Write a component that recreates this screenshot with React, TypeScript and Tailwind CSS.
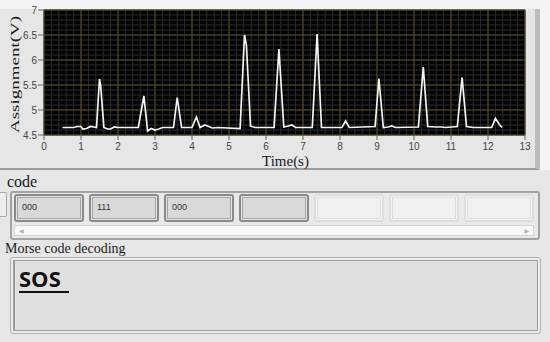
import React from "react";

const X0 = 44;
const Y0 = 10;
const PW = 481;
const PH = 125;
const px = (t: number) => X0 + (t / 13) * PW;
const py = (v: number) => Y0 + PH - ((v - 4.5) / 2.5) * PH;

const data: [number, number][] = [
  [0.5, 4.65], [0.8, 4.65], [0.9, 4.67], [1.0, 4.67], [1.05, 4.62], [1.15, 4.63], [1.25, 4.67], [1.35, 4.66], [1.42, 4.65],
  [1.5, 5.62], [1.53, 5.5], [1.62, 4.65], [1.72, 4.62], [1.8, 4.62], [1.9, 4.66], [2.0, 4.65], [2.55, 4.65],
  [2.7, 5.28], [2.8, 4.58], [2.9, 4.63], [3.0, 4.6], [3.1, 4.62], [3.2, 4.65], [3.5, 4.65],
  [3.6, 5.25], [3.72, 4.65], [4.0, 4.65], [4.12, 4.86], [4.22, 4.65], [4.35, 4.7], [4.45, 4.67], [4.55, 4.64], [4.7, 4.65], [5.3, 4.63],
  [5.42, 6.5], [5.47, 6.3], [5.58, 4.68], [5.7, 4.65], [6.22, 4.65],
  [6.35, 6.22], [6.48, 4.66], [6.6, 4.68], [6.7, 4.7], [6.8, 4.65], [7.25, 4.65],
  [7.38, 6.52], [7.5, 4.65], [8.05, 4.65], [8.15, 4.78], [8.25, 4.65], [8.95, 4.67],
  [9.05, 5.63], [9.17, 4.65], [9.3, 4.66], [9.4, 4.68], [9.5, 4.65], [10.12, 4.66],
  [10.25, 5.86], [10.37, 4.67], [10.6, 4.66], [10.75, 4.66], [10.85, 4.65], [11.17, 4.67],
  [11.3, 5.65], [11.42, 4.67], [11.6, 4.65], [12.1, 4.65], [12.2, 4.83], [12.32, 4.7], [12.38, 4.65],
];

function Chart() {
  const minorV = Array.from({ length: 66 }, (_, i) => X0 + (i * PW) / 65);
  const minorH = Array.from({ length: 26 }, (_, j) => Y0 + j * 5);
  const majorV = Array.from({ length: 14 }, (_, i) => X0 + (i * PW) / 13);
  const majorH = Array.from({ length: 6 }, (_, k) => Y0 + k * 25);
  const yLabels = ["7", "6.5", "6", "5.5", "5", "4.5"];
  const pts = data.map(([t, v]) => `${px(t).toFixed(1)},${py(v).toFixed(1)}`).join(" ");
  return (
    <svg width={511} height={145} className="block overflow-visible">
      <g transform="translate(-24,-9)">
        <rect x={X0} y={Y0} width={PW} height={PH} fill="#020202" />
        {minorV.map((x, i) => (
          <line key={"mv" + i} x1={x} x2={x} y1={Y0} y2={Y0 + PH} stroke="#2b2b2b" strokeWidth={1} />
        ))}
        {minorH.map((y, i) => (
          <line key={"mh" + i} x1={X0} x2={X0 + PW} y1={y} y2={y} stroke="#2b2b2b" strokeWidth={1} />
        ))}
        {majorV.map((x, i) => (
          <line key={"Mv" + i} x1={x} x2={x} y1={Y0} y2={Y0 + PH} stroke="#54461c" strokeWidth={1} />
        ))}
        {majorH.map((y, i) => (
          <line key={"Mh" + i} x1={X0} x2={X0 + PW} y1={y} y2={y} stroke="#54461c" strokeWidth={1} />
        ))}
        <polyline points={pts} fill="none" stroke="#f4f4f4" strokeWidth={1.7} strokeLinejoin="miter" />
        {majorH.map((y, i) => (
          <g key={"yl" + i}>
            <line x1={38} x2={44} y1={y} y2={y} stroke="#666" strokeWidth={1} />
            <text x={37} y={y + 3.5} textAnchor="end" fontSize={10} fill="#444" fontFamily="'Liberation Sans', Arial, sans-serif">
              {yLabels[i]}
            </text>
          </g>
        ))}
        {majorV.map((x, i) => (
          <g key={"xl" + i}>
            <line x1={x} x2={x} y1={135} y2={140} stroke="#666" strokeWidth={1} />
            <text x={x} y={150} textAnchor="middle" fontSize={10} fill="#444" fontFamily="'Liberation Sans', Arial, sans-serif">
              {i}
            </text>
          </g>
        ))}
      </g>
    </svg>
  );
}

function FilledCell({ text }: { text?: string }) {
  return (
    <div className="w-[70px] h-[28px] rounded-[3px] border-2 border-[#8a8a8a] bg-[#e4e4e4] p-[1px]">
      <div className="h-full border border-[#a6a6a6] bg-[#d9d9d9] flex items-center pl-[4px] text-[9px] text-[#333] font-['Liberation_Sans',Arial,sans-serif]">
        {text}
      </div>
    </div>
  );
}

function EmptyCell() {
  return (
    <div className="w-[70px] h-[28px] rounded-[3px] border-2 border-[#dedede] bg-[#f4f4f4] p-[1px]">
      <div className="h-full border border-[#dcdcdc] bg-[#f1f1f1]" />
    </div>
  );
}

export default function App() {
  return (
    <div className="w-[550px] h-[342px] overflow-hidden bg-[#e6e6e6] font-['Liberation_Serif','Times_New_Roman',serif] text-[#1a1a1a]">
      <div className="bg-[#f4f4f4] pt-[9px]">
        <div className="w-[540px] h-[161px] bg-[#e6e6e6] border-r-[5px] border-r-[#bcbcbc] border-b-2 border-b-[#9c9c9c] flex flex-col">
          <div className="flex h-[145px]">
            <div className="w-[24px] shrink-0 h-full flex items-center justify-center pl-[6px] pb-[14px]">
              <span className="whitespace-nowrap -rotate-90 scale-y-[0.7] text-[19px] leading-none">Assignment(V)</span>
            </div>
            <Chart />
          </div>
          <div className="ml-[262px] text-[15px] leading-[14px] whitespace-nowrap">Time(s)</div>
        </div>
      </div>
      <div className="pt-[3px]">
        <div className="pl-[7px] text-[16px] leading-[18px]">code</div>
        <div className="flex items-start">
          <div className="w-[7px] h-[25px] mt-[1px] border border-l-0 border-[#a8a8a8] rounded-r-[2px] bg-[#ededed]" />
          <div className="ml-[3px] w-[530px] h-[49px] rounded-[3px] border-2 border-[#a3a3a3] bg-[#e9e9e9] px-[2px] pt-[1px] flex flex-col gap-[3px]">
            <div className="flex gap-[5px]">
              <FilledCell text="000" />
              <FilledCell text="111" />
              <FilledCell text="000" />
              <FilledCell />
              <EmptyCell />
              <EmptyCell />
              <EmptyCell />
            </div>
            <div className="h-[11px] w-[520px] border border-[#d4d4d4] bg-[#f8f8f8] flex items-center justify-between px-[4px] text-[6px] text-[#b0b0b0] font-['DejaVu_Sans',sans-serif]">
              <span>◀</span>
              <span>▶</span>
            </div>
          </div>
        </div>
        <div className="pl-[5px] text-[14px] leading-[16px] mt-[1px]">Morse code decoding</div>
        <div className="ml-[10px] w-[531px] h-[77px] rounded-[3px] border border-[#b2b2b2] bg-[#ececec] p-[2px]">
          <div className="h-full border border-l-2 border-[#9c9c9c] bg-[#dfdfdf] pl-[4px] pt-[4px]">
            <div className="inline-block w-[50px] border-b-2 border-[#111] text-[22px] leading-[26px] font-bold text-[#111] font-['Open_Sans','Noto_Sans',sans-serif]">
              SOS
            </div>
          </div>
        </div>
      </div>
    </div>
  );
}
